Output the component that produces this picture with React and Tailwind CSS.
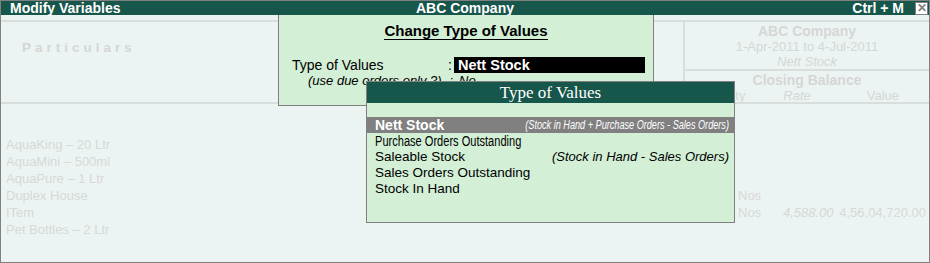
import React from "react";

const items = [
  { name: "AquaKing – 20 Ltr" },
  { name: "AquaMini – 500ml" },
  { name: "AquaPure – 1 Ltr" },
  { name: "Duplex House", unit: "Nos" },
  { name: "ITem", unit: "Nos", rate: "4,588.00", value: "4,56,04,720.00" },
  { name: "Pet Bottles – 2 Ltr" },
];

const options = [
  { name: "Purchase Orders Outstanding", narrow: true },
  { name: "Saleable Stock", hint: "(Stock in Hand - Sales Orders)" },
  { name: "Sales Orders Outstanding" },
  { name: "Stock In Hand" },
];

const App = () => {
  return (
    <div className="relative w-[930px] h-[263px] overflow-hidden border border-[#808080] bg-[#ebf4f2] font-['Liberation_Sans',Arial,sans-serif] text-[13px]">
      {/* Title bar */}
      <div className="flex h-[14px] items-center bg-[#17564a] text-white font-bold text-[14px] leading-none">
        <span className="pl-[9px] w-[360px]">Modify Variables</span>
        <span className="flex-1 text-center">ABC Company</span>
        <div className="w-[360px] flex justify-end items-center">
          <span className="pr-[11px]">Ctrl + M</span>
          <span className="mr-[1px] flex h-[13px] w-[13px] items-center justify-center border border-[#808080] bg-white text-[#808080] text-[12px]">✕</span>
        </div>
      </div>

      {/* Report header */}
      <div className="mt-[5px] flex h-[84px] border-t-2 border-b-2 border-[#d9dddc] text-[#d6d6d6]">
        <div className="flex-1 pl-[21px] pt-[16px] font-bold tracking-[4px] text-[13.5px]">Particulars</div>
        <div className="w-[246px] border-l-2 border-[#d9dddc] flex flex-col">
          <div className="h-[49px] border-b-2 border-[#d9dddc] flex flex-col items-center leading-[15px] pt-[2px]">
            <span className="font-bold text-[14px]">ABC Company</span>
            <span>1-Apr-2011 to 4-Jul-2011</span>
            <span className="italic">Nett Stock</span>
          </div>
          <div className="flex flex-col items-center leading-[15px] pt-[2px]">
            <span className="font-bold text-[14px]">Closing Balance</span>
            <div className="flex w-full pr-[30px]">
              <span className="w-[82px] text-left pl-[12px]">Quantity</span>
              <span className="w-[60px] text-center italic">Rate</span>
              <span className="flex-1 text-right">Value</span>
            </div>
          </div>
        </div>
      </div>

      {/* Items */}
      <div className="pt-[32px] pl-[5px] text-[#d8d8d8] leading-[17px]">
        {items.map((it) => (
          <div key={it.name} className="flex">
            <span className="w-[732px]">{it.name}</span>
            <span className="w-[45px]">{it.unit}</span>
            <span className="w-[50px] text-right italic">{it.rate}</span>
            <span className="w-[93px] text-right">{it.value}</span>
          </div>
        ))}
      </div>

      {/* Change Type of Values dialog */}
      <div className="absolute left-[277px] top-[14px] w-[376px] h-[91px] border border-t-0 border-[#808080] bg-[#d3efd6] text-black">
        <div className="flex justify-center pt-[8px]">
          <span className="font-bold text-[15px] border-b border-black leading-[16px]">Change Type of Values</span>
        </div>
        <div className="mt-[17px] flex items-center h-[16px] text-[14px]">
          <span className="pl-[13px] w-[169px]">Type of Values</span>
          <span className="w-[6px]">:</span>
          <span className="w-[191px] h-[16px] bg-black text-white font-bold text-[14.5px] pl-[4px] leading-[16px]">Nett Stock</span>
        </div>
        <div className="flex items-center h-[16px] italic text-[13px]">
          <span className="pl-[29px] w-[171px]">(use due orders only ?)</span>
          <span className="w-[9px] not-italic">:</span>
          <span>No</span>
        </div>
      </div>

      {/* Type of Values list */}
      <div className="absolute left-[365px] top-[80px] w-[369px] h-[142px] border border-[#808080] bg-[#d3efd6] text-black">
        <div className="h-[21px] bg-[#17564a] text-white text-center font-['Liberation_Serif',serif] text-[17px] leading-[21px]">
          Type of Values
        </div>
        <div className="mt-[14px] flex h-[16px] items-center justify-between bg-[#808080] text-white pl-[8px] pr-[5px]">
          <span className="font-bold text-[14px]">Nett Stock</span>
          <span className="inline-block italic text-[12.5px] whitespace-nowrap scale-x-[0.73] origin-right">(Stock in Hand + Purchase Orders - Sales Orders)</span>
        </div>
        <div className="leading-[16px] pl-[8px] pr-[5px]">
          {options.map((o) => (
            <div key={o.name} className="flex justify-between">
              <span className={o.narrow ? "inline-block whitespace-nowrap text-[14px] scale-x-[0.79] origin-left" : "text-[13.5px]"}>{o.name}</span>
              {o.hint && <span className="italic">{o.hint}</span>}
            </div>
          ))}
        </div>
      </div>
    </div>
  );
};

export default App;
